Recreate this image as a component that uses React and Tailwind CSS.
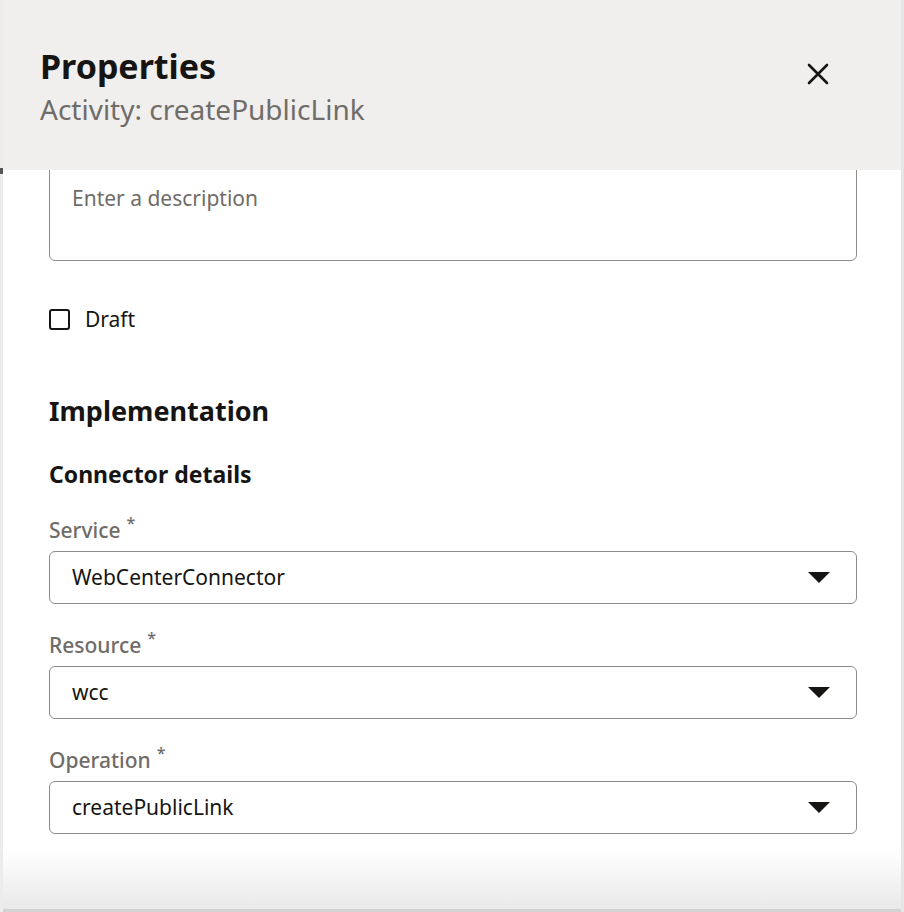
import React from "react";

function Caret() {
  return (
    <svg width="22" height="11" viewBox="0 0 22 11" className="shrink-0">
      <path d="M0 0 H22 L11 11 Z" fill="#161513" />
    </svg>
  );
}

function Select({ label, value }) {
  return (
    <div className="flex flex-col">
      <div className="flex items-start h-[36px] text-[21px] leading-[36px] font-medium text-[#6f6c69]">
        <span>{label}</span>
        <span className="ml-[6px] text-[16px] leading-[22px]">*</span>
      </div>
      <div className="mt-[3px] h-[53px] rounded-[6px] border border-[#8f8c88] flex items-center justify-between pl-[22px] pr-[26px]">
        <span className="text-[21px] text-[#161513]">{value}</span>
        <Caret />
      </div>
    </div>
  );
}

export default function App() {
  return (
    <div
      className="w-[904px] h-[912px] bg-white flex flex-col overflow-hidden relative"
      style={{ fontFamily: '"Noto Sans", "Open Sans", sans-serif' }}
    >
      <div className="absolute left-0 top-[168px] w-[3px] h-[6px] bg-[#555]" />
      <div className="flex-1 flex flex-col border-l-[3px] border-l-[#ececec] border-r-[3px] border-r-[#e6e6e6] min-h-0">
        <div className="h-[170px] shrink-0 bg-[#f1efed] flex justify-between pl-[37px] pr-[72px] pt-[46px]">
          <div className="flex flex-col">
            <div className="text-[34px] leading-[40px] font-bold text-[#161513]">Properties</div>
            <div className="mt-[6px] text-[28px] leading-[34px] text-[#6f6c69]">Activity: createPublicLink</div>
          </div>
          <svg width="22" height="22" viewBox="0 0 22 22" className="mt-[17px]">
            <path d="M2 2 L20 20 M20 2 L2 20" stroke="#161513" strokeWidth="2.6" strokeLinecap="round" />
          </svg>
        </div>
        <div className="flex-1 min-h-0 overflow-hidden pl-[46px] pr-[44px]">
          <div className="-mt-[16px] flex flex-col">
            <div className="h-[107px] rounded-[6px] border border-[#8f8c88] pl-[22px] pt-[28px] text-[21px] leading-[30px] text-[#6f6c69]">
              Enter a description
            </div>
            <div className="mt-[44px] flex items-center gap-[15px]">
              <div className="w-[21px] h-[21px] rounded-[3px] border-[2px] border-[#161513]" />
              <span className="text-[21px] leading-[28px] text-[#161513]">Draft</span>
            </div>
            <div className="mt-[60px] text-[27px] leading-[36px] font-bold text-[#161513]">Implementation</div>
            <div className="mt-[30px] text-[23px] leading-[30px] font-bold text-[#161513]">Connector details</div>
            <div className="mt-[23px] flex flex-col gap-[23px]">
              <Select label="Service" value="WebCenterConnector" />
              <Select label="Resource" value="wcc" />
              <Select label="Operation" value="createPublicLink" />
            </div>
          </div>
        </div>
        <div className="h-[62px] shrink-0 bg-gradient-to-b from-white to-[#e9e9e9] border-b-[3px] border-b-[#d3d3d3]" />
      </div>
    </div>
  );
}
